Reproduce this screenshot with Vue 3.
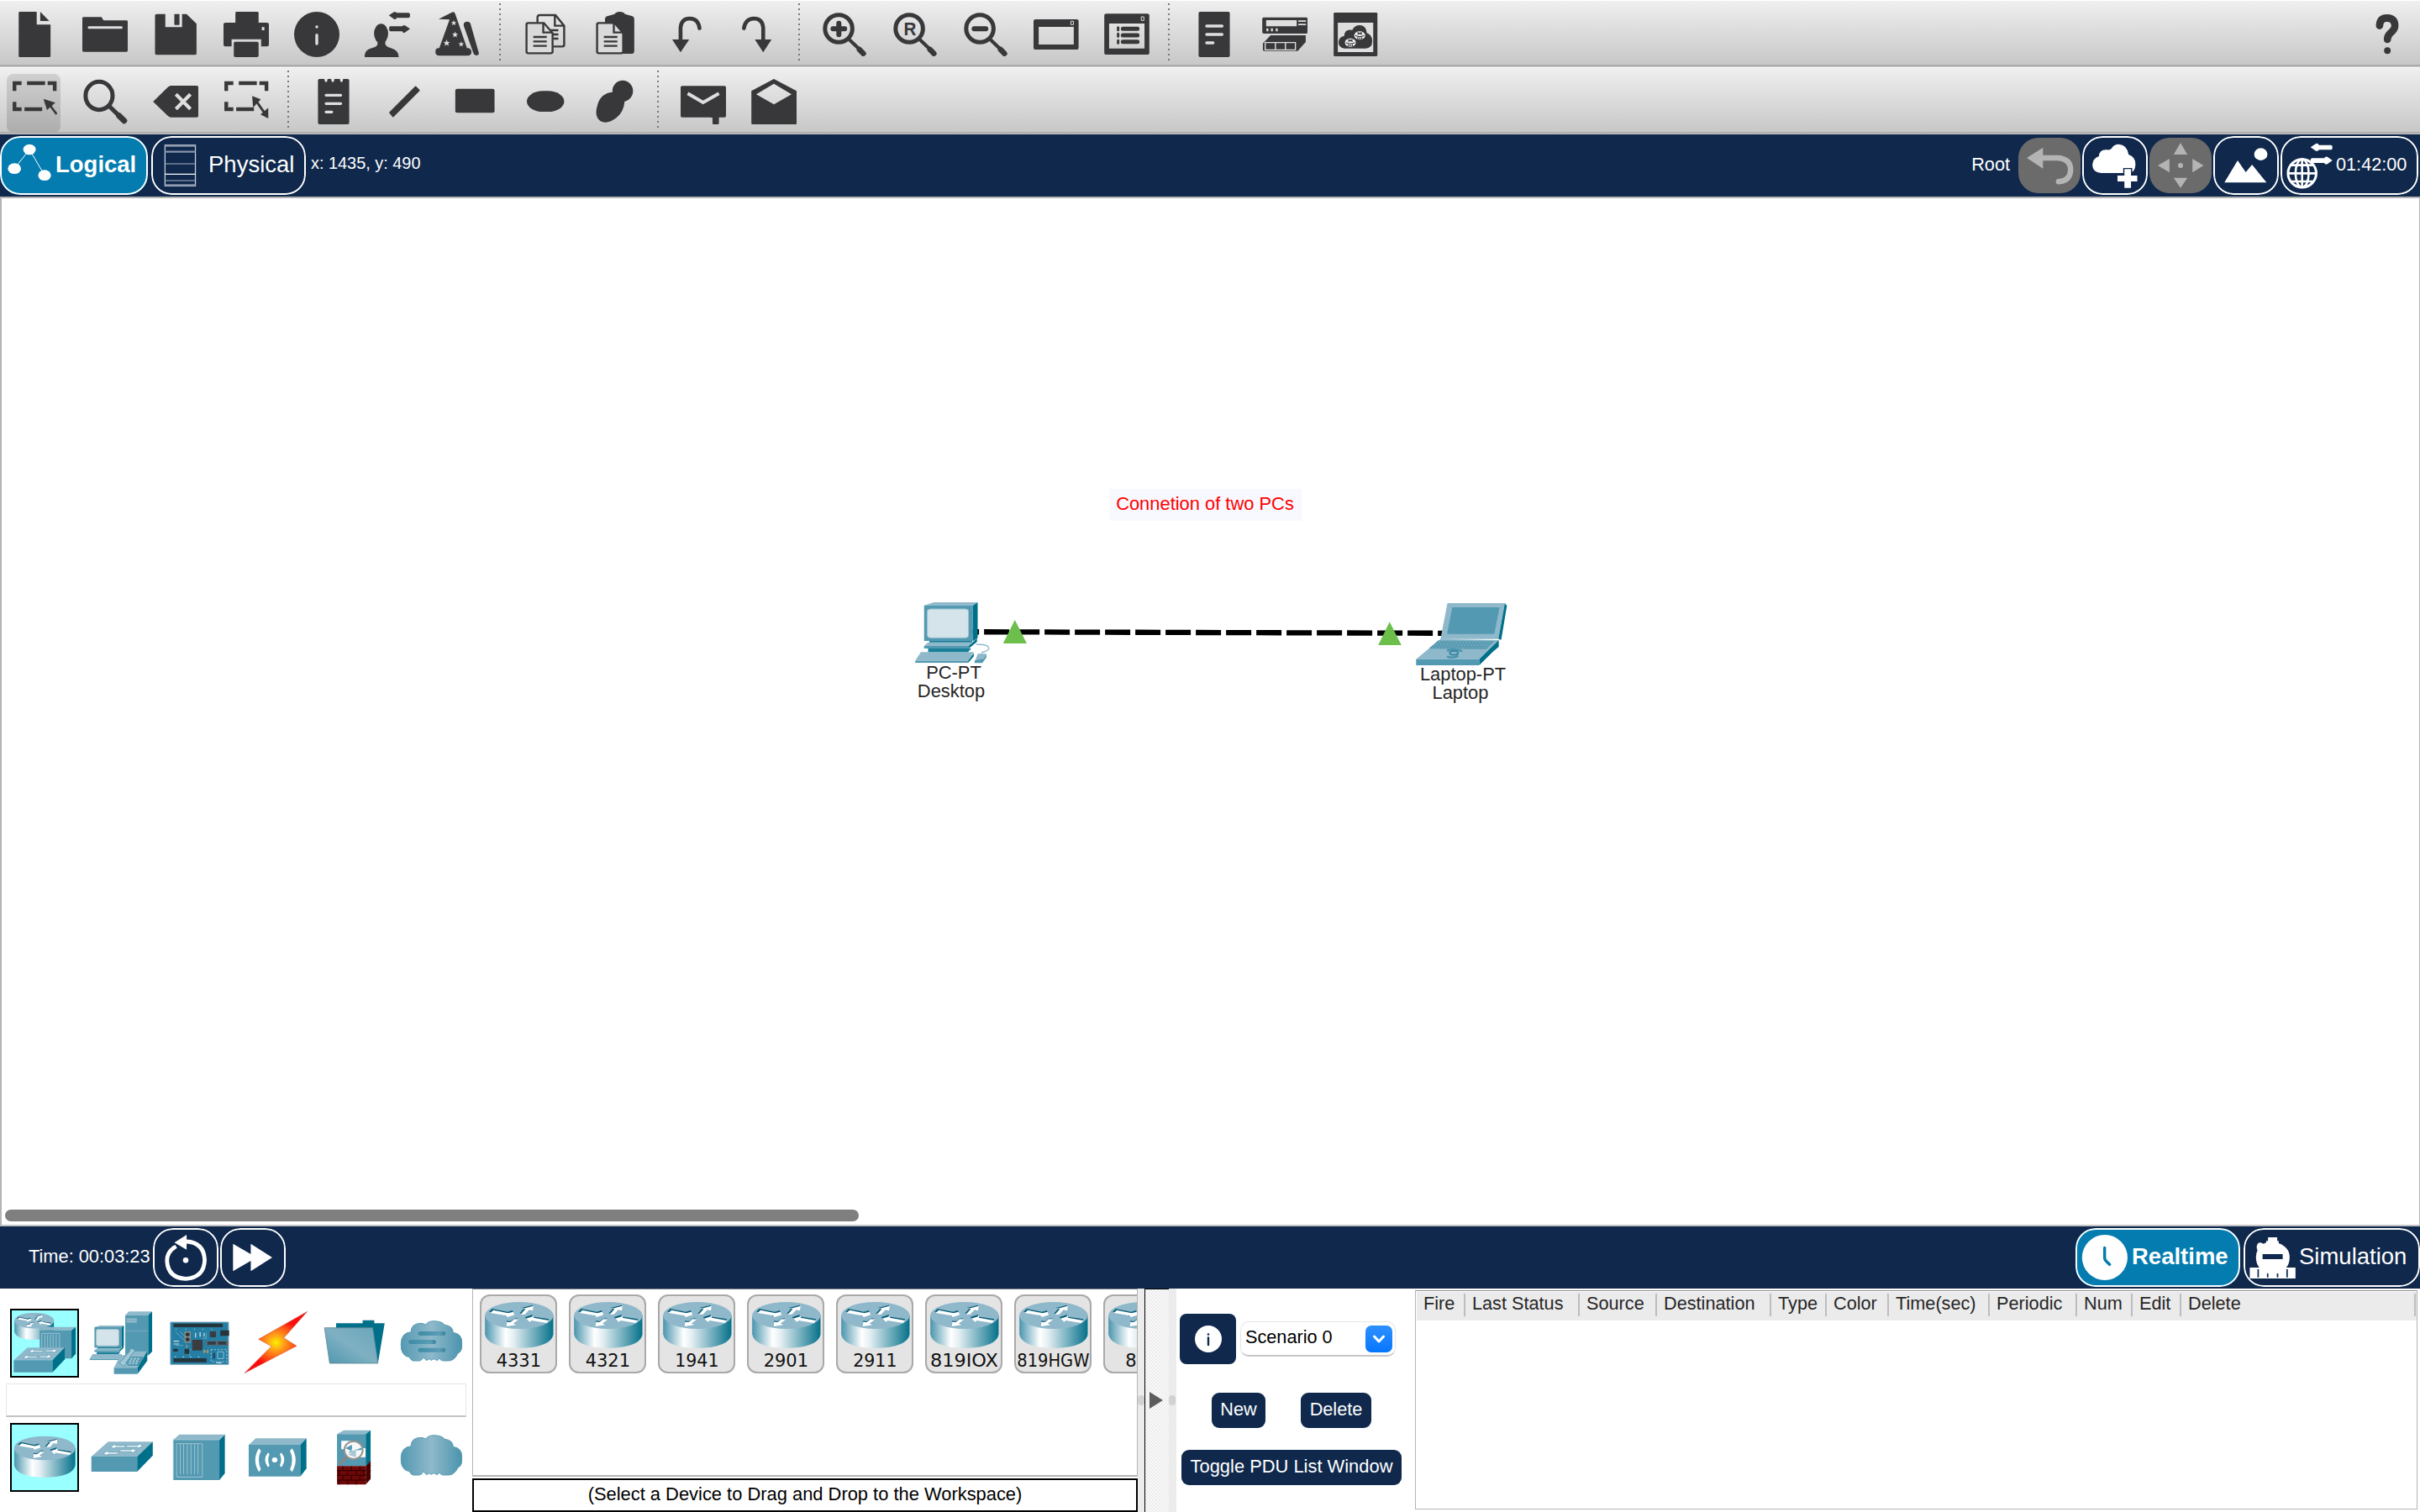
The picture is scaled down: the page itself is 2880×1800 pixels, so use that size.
<script setup>
function star(cx, cy, r) {
  const pts = []
  for (let i = 0; i < 10; i++) {
    const a = (-90 + i * 36) * Math.PI / 180
    const k = i % 2 ? 0.42 : 1
    pts.push((cx + Math.cos(a) * r * k).toFixed(1) + ',' + (cy + Math.sin(a) * r * k * 1.15).toFixed(1))
  }
  return `<polygon class="c" points="${pts.join(' ')}"/>`
}

const page = (dx, bg) => `<path class="s ${bg}" stroke-width="2.4" d="M${125 + dx} 82H${176 + dx}L${203 + dx} 118V184q0 6-6 6H${127 + dx}q-5 0-5-6V87q0-5 5-5z"/><path class="s" stroke-width="2.4" d="M${174 + dx} 82V116H${202 + dx}M${143 + dx} 132h42M${143 + dx} 148h42M${143 + dx} 164h42"/>`
const lens = (dx) => `<ellipse class="s" stroke-width="5" cx="${1092.5 + dx}" cy="102" rx="42.5" ry="49"/><path class="s" stroke-width="4.2" d="M${1125 + dx} 141L${1168 + dx} 188"/><path class="s r" stroke-width="6.5" d="M${1157 + dx} 177L${1169 + dx} 191"/>`
const marquee = (dx) => `<path class="s" stroke-width="4.4" d="M${45 + dx} 325V297H${67 + dx}M${84 + dx} 297h56M${148 + dx} 297H${170 + dx}V325M${45 + dx} 364V390H${67 + dx}M${76 + dx} 390h55"/>`

const mainTools = [
  { x: 36.5, g: '<path d="M62 42H114V88H157V200q0 4-4 4H62q-4 0-4-4V46q0-4 4-4zM125 42L153 75H125z"/>' },
  { x: 256, g: '<path d="M260 61H316q4 12 8 12H393q4 0 4 4V181q0 4-4 4H260q-4 0-4-4V65q0-4 4-4z"/><rect class="c" x="273" y="94" width="108" height="9" rx="4"/>' },
  { x: 475.5, g: '<path d="M487 50H514V97H566V50H580L611 85V191q0 5-5 5H487q-5 0-5-5V55q0-5 5-5z"/><rect x="542" y="50" width="16" height="39" rx="2"/>' },
  { x: 695, g: '<path fill-rule="evenodd" d="M732 46q0-4 4-4H800q4 0 4 4V81H830q6 0 6 6V160q0 6-6 6H812V140H720V166H700q-5 0-5-6V87q0-6 6-6H732zM814 97h8v11h-8z"/><rect x="727" y="149" width="77" height="55" rx="5"/>' },
  { x: 914.5, g: '<ellipse cx="985" cy="123" rx="70.5" ry="81"/><ellipse class="c" cx="985" cy="96" rx="4.5" ry="5"/><path class="l r" stroke-width="3.4" d="M985 125V156"/>' },
  { x: 1134, g: '<ellipse cx="1185" cy="120" rx="22" ry="35"/><path d="M1134 204q-2-26 22-32q18-5 18-16V140h24V156q0 10 18 16q24 8 24 32zM1209 55L1225 43q8-2 8 3H1270q5 0 5 9q0 9-5 9H1233q0 7-8 4zM1275 103L1259 91q-8-2-8 3H1214q-4 0-4 9q0 9 4 9H1251q0 7 8 4z"/>' },
  { x: 1353.5, g: '<path d="M1364 68L1405 44q8-3 10 4L1452 172H1456q10 2 10 14q0 12-12 13H1366q-12-1-12-14q0-12 8-13H1366L1398 70zM1442 92q-2-13 9-15q10-1 12 8L1489 190q0 8-8 8q-7 0-9-8z"/>' + star(1411, 82, 9) + star(1415, 124, 10) + star(1389, 154, 11) + star(1434, 158, 9) },
  { sep: true },
  { x: 110, g: '<path class="s" stroke-width="2.4" d="M156 80V62q0-8 8-8H212L239 92V160q0 6-6 6H206M210 56V92H238M197 108h24M204 123h17M206 138h15"/>' + page(0, 'f') },
  { x: 329.5, g: '<path d="M366 78V68q0-10 12-12L396 50Q400 42 412 42Q424 42 428 50L446 56q11 2 11 12V182q0 10-10 10H366z"/>' + page(219.5, 'f') },
  { x: 549, g: '<path class="s r" stroke-width="4.6" d="M601 145V98Q604 66 630 66Q656 67 660 101"/><path d="M575 141H628L601 187z"/>' },
  { x: 768.5, g: '<path class="s r" stroke-width="4.6" d="M858 145V98Q855 66 829 66Q803 67 798 101"/><path d="M832 141H884L858 187z"/>' },
  { sep: true },
  { x: 1040, g: lens(0) + '<path class="s r" stroke-width="6" d="M1075 103H1111M1093 83V124"/>' },
  { x: 1259.5, g: lens(219.5) + '<text x="1295" y="126" font-size="66" font-weight="bold" textLength="39" lengthAdjust="spacingAndGlyphs">R</text>' },
  { x: 1479, g: lens(439) + '<path class="s r" stroke-width="6" d="M1514 103H1550"/>' },
  { x: 183, g: '<path fill-rule="evenodd" d="M190 69H316q7 0 7 7V170q0 7-7 7H190q-7 0-7-7V76q0-7 7-7zM199 96H308V159H199z"/><rect class="l" stroke-width="1" x="299" y="76" width="8" height="12"/>' },
  { x: 402.5, g: '<path fill-rule="evenodd" d="M410 49H536q7 0 7 7V188q0 7-7 7H410q-7 0-7-7V56q0-7 7-7zM418 84H528V173H418z"/><rect class="l" stroke-width="1" x="518" y="60" width="8" height="13"/><path class="s r" stroke-width="5" d="M461 103H506M461 126H506M461 149H506"/><path class="s r" stroke-width="3" d="M446 98v9M446 121v9M446 145v9"/>' },
  { sep: true },
  { x: 674, g: '<rect x="696" y="42" width="97" height="162" rx="5"/><path class="l r" stroke-width="3.4" d="M721 93h48M721 123h48M721 153h20"/>' },
  { x: 893.5, g: '<rect x="894" y="62" width="141" height="58" rx="5"/><path class="c" d="M906 72h95v22h-95zM1006 73h24v5h-24zM1006 85h24v5h-24zM907 101h6v11h-6zM921 101h6v11h-6zM936 101h6v11h-6z"/><path d="M920 126H1029V150L1004 182H900q-4 0-4-5V155z"/><path class="l" stroke-width="1.4" d="M903 152H997V178H903zM935 152V178M966 152V178"/>' },
  { x: 1113, g: '<rect x="1116" y="45" width="136" height="156" rx="4"/><rect class="c" x="1129" y="81" width="110" height="105"/><path d="M1150 173Q1131 171 1131 150Q1132 132 1149 128Q1150 102 1174 107Q1180 90 1198 90Q1218 92 1219 118Q1236 125 1236 148Q1236 173 1215 173z"/><g class="w"><ellipse cx="1197" cy="127" rx="17" ry="15"/><ellipse cx="1168" cy="152" rx="17" ry="15"/></g><path class="s" stroke-width="1.2" d="M1183 127q14 8 28 0M1190 116l14 7M1204 116l-14 7M1191 133v7M1197 134v7M1203 133v7M1154 152q14 8 28 0M1161 141l14 7M1175 141l-14 7M1162 158v7M1168 159v7M1174 158v7"/>' },
  { x: 1385, w: 151, last: true, g: '<path class="s r" stroke-width="8.6" d="M1435 92Q1436 64 1460 64Q1486 65 1486 92Q1486 104 1472 117Q1461 127 1461 141"/><ellipse cx="1461" cy="181" rx="11" ry="12"/>' }
]

const editTools = [
  { x: 36.5, on: true, g: marquee(0) + '<path d="M135 353L172 367L146 393z"/><path class="s" stroke-width="2.6" d="M155 376L176 408"/>' },
  { x: 256, g: '<ellipse class="s" stroke-width="5" cx="308" cy="342" rx="42" ry="50"/><path class="s" stroke-width="5" d="M340 380L380 424"/><path class="s r" stroke-width="7" d="M370 413L386 431"/>' },
  { x: 475.5, g: '<path d="M476 363L522 311q5-5 10-5H610q7 0 7 6V412q0 7-7 7H532q-5 0-10-5z"/><path class="l" stroke-width="4.2" d="M547 337L592 389M592 337L547 389"/>' },
  { x: 695, g: marquee(658.5) + '<path d="M784 343L811 355L787 384zM834 423L810 409L834 385z"/><path class="s" stroke-width="2.8" d="M795 358L824 406"/>' },
  { sep: true },
  { x: 967, g: '<path d="M994 282H1009q1 11 5 11q4 0 5-11H1030q1 11 5 11q4 0 5-11H1057q1 11 5 11q4 0 5-11H1081q5 0 5 5V439q0 5-5 5H994q-5 0-5-5V287q0-5 5-5z"/><path class="l r" stroke-width="3.2" d="M1014 340h46M1014 370h46M1014 400h18"/>' },
  { x: 1186, g: '<path class="s d" stroke-linejoin="round" stroke-width="1.6" d="M1212 402L1292 310L1303 323L1222 416z"/>' },
  { x: 1406, g: '<rect x="1416" y="317" width="122" height="86" rx="6"/>' },
  { x: 110, g: '<rect x="123" y="325" width="116" height="74" rx="50" ry="37"/>' },
  { x: 329.5, g: '<ellipse cx="421" cy="325" rx="32" ry="38"/><path d="M388 329Q352 334 343 374Q331 415 352 433Q375 445 402 420Q424 400 427 362L428 340z"/>' },
  { sep: true },
  { x: 601, g: '<rect x="601" y="307" width="141" height="112" rx="5"/><path class="l" stroke-width="4" d="M623 334L671 366L720 334"/><path d="M683 415H720V440q0 4-4 4H703q-3 0-3-4V421z"/>' },
  { x: 820.5, g: '<path fill-rule="evenodd" d="M821 325L891 282L962 325V440q0 4-4 4H825q-4 0-4-4zM836 337L891 373L946 337L891 299z"/>' }
]

const routers = [
  { t: '4331', w: 149 }, { t: '4321', w: 149 }, { t: '1941', w: 146 }, { t: '2901', w: 149 },
  { t: '2911', w: 146 }, { t: '819IOX', w: 226 }, { t: '819HGW', w: 241 }, { t: '829', w: 112 }
]

const columns = [
  { t: 'Fire', w: 58 }, { t: 'Last Status', w: 136 }, { t: 'Source', w: 92 }, { t: 'Destination', w: 136 },
  { t: 'Type', w: 66 }, { t: 'Color', w: 74 }, { t: 'Time(sec)', w: 120 }, { t: 'Periodic', w: 104 },
  { t: 'Num', w: 66 }, { t: 'Edit', w: 58 }, { t: 'Delete', w: 279 }
]
</script>

<template>
  <div class="app">
    <svg class="defs" width="0" height="0">
      <defs>
        <linearGradient id="gBody"><stop offset="0" stop-color="#4a94ad" /><stop offset=".3" stop-color="#fff" /><stop offset=".42" stop-color="#e3eef2" /><stop offset="1" stop-color="#04708a" /></linearGradient>
        <linearGradient id="gCloud"><stop offset="0" stop-color="#5399b1" /><stop offset=".5" stop-color="#8fb9cb" /><stop offset="1" stop-color="#4a94ad" /></linearGradient>
        <linearGradient id="gFolder" x1="0" y1="1" x2="1" y2="0"><stop offset="0" stop-color="#4f96af" /><stop offset=".5" stop-color="#7fb0c2" /><stop offset="1" stop-color="#6aa5ba" /></linearGradient>
        <linearGradient id="gSlot"><stop offset="0" stop-color="#3f8ba5" /><stop offset=".8" stop-color="#5a9db4" /><stop offset="1" stop-color="#357f99" /></linearGradient>
        <radialGradient id="gBolt" gradientUnits="userSpaceOnUse" cx="903" cy="535" r="85"><stop offset="0" stop-color="#ffee00" /><stop offset=".35" stop-color="#ff9a1a" /><stop offset=".75" stop-color="#ff4a12" /><stop offset="1" stop-color="#fb0d0d" /></radialGradient>
        <symbol id="router" viewBox="105 389 228 166" preserveAspectRatio="none">
          <path fill="url(#gBody)" d="M105 437H333V505Q325 553 219 555Q113 553 105 505z" />
          <ellipse cx="219" cy="438" rx="114" ry="48" fill="#8fb8ca" />
          <g>
            <path fill="#0b5f7a" d="M119 425L129 414L180 425L197 420L200 431L175 441L170 435zM238 444L264 435L262 442L318 451L312 461L256 452L250 457zM220 431L236 412L226 411L264 401L262 418L250 415L234 432zM216 448L198 462L206 468L178 472L178 457L190 459L203 449z" />
            <path fill="#fff" d="M123 429L133 419L182 430L199 425L203 436L180 444L174 438zM242 449L268 440L266 446L317 456L311 465L260 456L254 461zM224 434L240 415L231 414L266 404L264 421L252 418L238 434zM217 452L201 466L208 472L177 477L178 461L190 462L203 451z" />
          </g>
        </symbol>
        <symbol id="pc" viewBox="60 471 154 217" preserveAspectRatio="none">
          <path fill="#8fb9cb" d="M82 482L106 471H214L202 482zM92 614H200L192 626H82zM74 649H204L190 680H60z" />
          <path fill="#00708a" d="M202 482L214 471V598L202 610zM192 626L212 600V612L192 636zM190 680L204 652V664L190 688z" />
          <path fill="#1a8099" d="M95 606H200V614H95zM92 636H198L190 649H92z" />
          <path fill="#5399b1" d="M82 482H202V609H82zM82 626H192V636H82zM60 680H190V688H60z" />
          <rect x="90" y="495" width="101" height="103" rx="9" fill="#d5e4ea" stroke="#9cc3d2" stroke-width="1" />
        </symbol>
        <symbol id="cloud" viewBox="1310 456 204 147" preserveAspectRatio="none">
          <path fill="url(#gCloud)" stroke="#5b9cb3" stroke-width="1" d="M1352 600Q1343 597 1340 587Q1311 582 1312 540Q1313 500 1345 497Q1345 468 1376 466Q1386 466 1393 471Q1402 458 1420 458Q1448 459 1455 472Q1483 475 1483 499Q1512 503 1512 535Q1514 567 1499 573Q1487 600 1468 600H1452Q1442 600 1438 591L1431 599L1420 593L1411 598L1405 593L1396 599L1385 587Q1381 600 1371 600z" />
        </symbol>
      </defs>
    </svg>

    <div v-for="(tools, n) in [mainTools, editTools]" :key="n" class="toolbar">
      <template v-for="(t, i) in tools" :key="i">
        <i v-if="t.sep" class="sep"></i>
        <span v-else class="tool" :class="{ on: t.on, last: t.last }">
          <svg :viewBox="`${t.x} ${n ? 282 : 42} ${t.w || 141} 162`" preserveAspectRatio="none" v-html="t.g"></svg>
        </span>
      </template>
    </div>

    <nav class="bar">
      <div class="pill on logical">
        <svg viewBox="0 486 173 210" preserveAspectRatio="none" width="66">
          <path d="M45 602L92 534L139 626" fill="none" stroke="#fff" stroke-width="1" />
          <g fill="#fff"><ellipse cx="92" cy="534" rx="19.500" ry="19" /><ellipse cx="45" cy="602" rx="20.500" ry="19" /><ellipse cx="139" cy="626" rx="20" ry="19" /></g>
        </svg><b>Logical</b>
      </div>
      <div class="pill physical">
        <svg viewBox="470 486 176 210" preserveAspectRatio="none" width="67">
          <path d="M513 518H608V664H513z" fill="none" stroke="#c9d0da" stroke-width="1.300" />
          <path d="M513 521H608M513 542H608M513 661H608" fill="none" stroke="#8792a8" stroke-width="2.200" />
          <path d="M513 585H608M513 645H608" stroke="#a9b3c3" stroke-width="1.200" /><path d="M513 622H608" stroke="#fff" stroke-width="1.200" />
        </svg><span>Physical</span>
      </div>
      <span class="coords">x: 1435, y: 490</span>
      <span class="root">Root</span>
      <div class="pill gray">
        <svg viewBox="230 492 207 198" preserveAspectRatio="none" width="74">
          <path d="M258 564L312 527V602z" fill="#b4b4b4" /><path d="M305 564H362Q404 568 404 606Q403 646 364 649" fill="none" stroke="#b4b4b4" stroke-width="6.500" stroke-linecap="round" />
        </svg>
      </div>
      <div class="pill">
        <svg viewBox="442 486 219 210" preserveAspectRatio="none" width="78">
          <path fill="#fff" d="M505 618Q476 616 476 588Q478 565 498 558Q499 532 526 535Q535 537 540 530Q548 515 564 515Q592 517 597 552Q620 560 620 587Q619 612 602 618z" />
          <path d="M556 623H579V600H609V623H632V652H609V675H579V652H556z" fill="#0f284c" />
          <path d="M560 627H583V604H605V627H626V648H605V671H583V648H560z" fill="#fff" />
        </svg>
      </div>
      <div class="pill gray">
        <svg viewBox="666 492 208 198" preserveAspectRatio="none" width="74">
          <g fill="#b4b4b4"><path d="M770 510L793 552H747zM770 671L793 635H747zM694 591L733 567V616zM847 591L810 567V616z" /><ellipse cx="770" cy="591" rx="8.500" ry="9" /></g>
        </svg>
      </div>
      <div class="pill">
        <svg viewBox="880 486 218 210" preserveAspectRatio="none" width="78">
          <g fill="#fff"><path d="M917 652L961 573L988 615L1009 588L1057 652z" /><ellipse cx="1038" cy="551" rx="22" ry="22" /></g>
        </svg>
      </div>
      <div class="pill clock">
        <svg viewBox="1104 486 182 210" preserveAspectRatio="none" width="65">
          <g fill="none" stroke="#fff" stroke-width="2.600"><ellipse cx="1176" cy="619" rx="47" ry="50" stroke-width="3" /><ellipse cx="1176" cy="619" rx="22" ry="50" /><path d="M1176 569V669M1129 619H1223M1139 590H1213M1139 648H1213" /></g>
          <path fill="#fff" d="M1204 526L1222 513q8-2 10 5H1272q5 0 5 9q0 8-5 8H1232q-2 6-10 4zM1277 573L1260 560q-8-2-10 5H1210q-6 0-6 8q0 9 6 9H1250q2 8 10 4z" />
        </svg><span>01:42:00</span>
      </div>
    </nav>

    <main class="workspace">
      <svg class="topology" viewBox="0 0 1568 900" preserveAspectRatio="none">
        <path d="M155 576.500L1380 581.500" stroke="#000" stroke-width="6.300" stroke-dasharray="30 6" />
        <path fill="#6cbf4b" d="M305 534L334 618H276zM1225 541L1254 624H1197z" />
        <use href="#pc" x="60" y="471" width="154" height="217" />
        <path d="M210 622Q240 620 241 635Q240 645 228 648Q222 650 225 656" fill="none" stroke="#8fb9cb" stroke-width="1.300" />
        <path fill="#8fb9cb" d="M214 655H235L229 676L207 681z" /><path fill="#5399b1" d="M206 679L229 673L235 655V668L225 688H206z" />
        <path fill="#8fb9cb" d="M1367 474H1508L1492 602H1350zM1350 602L1493 606L1445 674H1290z" />
        <path fill="#00708a" d="M1508 474L1513 484L1499 605L1492 602zM1445 674L1493 606V630L1480 646L1445 696z" />
        <path fill="#5399b1" d="M1379 489H1495L1482 584H1366zM1290 674H1445V696H1290z" />
        <path fill="#6aa5ba" d="M1345 607L1484 609L1462 639L1321 637z" />
        <path d="M1341 613L1480 615M1336 620L1475 622M1330 627L1470 629M1325 633L1466 635" stroke="#3d8aa4" stroke-width="1" stroke-dasharray="2 2" />
        <path d="M1366 645Q1372 638 1390 641Q1402 642 1402 648M1366 665Q1380 673 1394 662" fill="none" stroke="#4b93ac" stroke-width="2.500" /><ellipse cx="1383" cy="652" rx="10" ry="7" fill="none" stroke="#3a88a2" stroke-width="2" />
      </svg>
      <div class="note">Connetion of two PCs</div>
      <div class="name pc-name">PC-PT<br><span>Desktop</span></div>
      <div class="name lt-name">Laptop-PT<br><span>Laptop</span></div>
      <div class="scroll"></div>
    </main>

    <div class="bar sim">
      <span class="time">Time: 00:03:23</span>
      <div class="pill">
        <svg viewBox="501 126 214 210" preserveAspectRatio="none" width="78">
          <path d="M570 196Q547 213 547 243Q550 304 608 307Q668 303 670 240Q667 177 610 174" fill="none" stroke="#fff" stroke-width="4.800" />
          <path d="M571 178L611 150V203z" fill="#fff" /><path d="M564 191L574 186L580 197L570 204z" fill="#fff" /><ellipse cx="608" cy="241" rx="9" ry="10" fill="#fff" />
        </svg>
      </div>
      <div class="pill">
        <svg viewBox="721 126 214 210" preserveAspectRatio="none" width="78"><path fill="#fff" d="M763 182L821 219V182L891 231L821 280V243L763 280z" /></svg>
      </div>
      <div class="modes">
        <div class="pill on realtime">
          <svg viewBox="623 96 150 210" preserveAspectRatio="none" width="65">
            <ellipse cx="703.500" cy="201" rx="62.500" ry="81" fill="#fff" /><path d="M703 166V205Q705 214 717 226" fill="none" stroke="#047caf" stroke-width="3.400" stroke-linecap="round" />
          </svg><b>Realtime</b>
        </div>
        <div class="pill simulation">
          <svg viewBox="1085 96 147 210" preserveAspectRatio="none" width="64">
            <path fill="#fff" d="M1152 129H1177V142H1181V150Q1211 165 1211 200Q1211 222 1202 237H1227V276H1102V237H1128Q1119 222 1119 200Q1119 185 1123 176Q1118 160 1125 150Q1132 144 1139 152L1147 148V142H1152z" />
            <path fill="#0f284c" d="M1137 189H1192V207H1137zM1123 243h4v29h-4zM1149 258h4v14h-4zM1176 258h4v14h-4zM1202 243h4v29h-4z" />
          </svg><span>Simulation</span>
        </div>
      </div>
    </div>

    <footer class="dock">
      <section class="kinds">
        <div class="row">
          <div class="kind on">
            <svg viewBox="33 414 225.600 246" preserveAspectRatio="none">
              <use href="#router" x="47" y="428" width="130" height="97" />
              <path fill="#8fb9cb" d="M130 491L146 479H248L234 491z" />
              <path fill="#5399b1" d="M130 491H234V592H130z" /><path fill="#00708a" d="M234 491L248 479V575L234 592z" />
              <path d="M137 555V502H195V560M147 506V555M156 506V555M165 506V555M174 506V555M184 506V555" fill="none" stroke="#9cc3d2" stroke-width="1" />
              <path fill="#8fb9cb" d="M45 598L90 553H212L172 598z" /><path fill="#5399b1" d="M45 598H172V641H45z" /><path fill="#00708a" d="M172 598L212 553V595L172 641z" />
              <path fill="#fff" stroke="#3a88a2" stroke-width=".500" d="M95 566L110 558V563H142L139 568H107V572zM188 564L172 571V567H148L151 562H174V557zM76 587L92 579V584H124L121 589H88V594zM170 584L154 592V588H128L131 583H156V578z" />
            </svg>
          </div>
          <div class="kind">
            <svg viewBox="286 414 225.600 246" preserveAspectRatio="none">
              <path fill="#8fb9cb" d="M410 437L422 424H498L485 437z" /><path fill="#5399b1" d="M410 437H485V581H410z" /><path fill="#00708a" d="M485 437L498 424V567L485 581z" />
              <rect x="414" y="448" width="34" height="16" fill="#8fb9cb" /><path d="M410 493H485M414 456H448" stroke="#79abc0" stroke-width="1" />
              <use href="#pc" x="293" y="474" width="113" height="124" />
              <path fill="#8fb9cb" d="M373 625L392 584L440 566H482L450 625z" /><path fill="#5399b1" d="M373 625H450V647H373zM413 605L425 585H470L455 618H418z" /><path fill="#00708a" d="M450 625L482 566V600L450 647z" />
              <path d="M427 593h30M423 601h30M421 609h30" stroke="#b7d2dd" stroke-width="1.600" stroke-dasharray="2.500 1.500" />
              <path fill="#a4c7d5" stroke="#5399b1" stroke-width="1" d="M391 607Q394 600 400 598L424 566Q424 557 432 556L441 561Q443 568 434 574L412 608Q412 617 404 620z" />
            </svg>
          </div>
          <div class="kind">
            <svg viewBox="539 414 225.600 246" preserveAspectRatio="none">
              <rect x="558" y="462" width="190" height="151" fill="#257ea4" stroke="#7fa9b9" stroke-width="1" />
              <path d="M575 497L605 528M590 497L610 518M663 560L680 570M620 582V560H628M663 520H675V500M575 545H600M640 500V520M655 500V515" fill="none" stroke="#5fa6c2" stroke-width="1" />
              <path fill="#26343b" d="M568 467H729V480H568zM568 591H676V605H568zM721 491H750V511H721zM567 557H582V567H567zM604 558H620V575H604z" />
              <path fill="#3a3c3f" d="M629 525H663V563H629zM687 495H707V516H687z" /><path fill="#5c656a" d="M675 529H747V545H675z" /><path fill="#333c42" d="M680 531H706V542H680zM714 531H740V542H714z" />
              <rect x="604" y="495" width="20" height="40" fill="#8b8f8b" /><ellipse cx="614" cy="506" rx="7" ry="7" fill="#333" /><ellipse cx="614" cy="524" rx="7" ry="7" fill="#333" />
              <path d="M691 560H742V603H691z" fill="none" stroke="#a7cbd8" stroke-width="1" stroke-dasharray="2 2" /><path d="M712 568h20v24h-20z" fill="none" stroke="#8fbfd1" stroke-width="1" /><rect x="697" y="572" width="7" height="20" fill="#1c4c66" />
              <path d="M568 530H586M568 540H586M575 487h2M607 487h2M635 487h2M663 487h2M692 487h2M574 584v4M600 584v4M624 584v4M650 584v4M640 500v16M655 498v16M668 500v14M708 607H726" stroke="#c9dde4" stroke-width="1.200" />
              <path fill="#d79b4a" d="M678 560h4v12h-4zM609 545h5v6h-5zM667 562h4v10h-4z" />
            </svg>
          </div>
          <div class="kind">
            <svg viewBox="792 414 225.600 246" preserveAspectRatio="none"><path fill="url(#gBolt)" stroke="#c9574a" stroke-width=".500" d="M1006 424L929 518L971 547L800 644L888 548L846 523z" /></svg>
          </div>
          <div class="kind">
            <svg viewBox="1045 414 225.600 246" preserveAspectRatio="none"><path fill="#00708a" d="M1100 490V466H1187V455H1225V466H1259L1237 609L1215 490z" /><path fill="url(#gFolder)" stroke="#5b8594" stroke-width=".800" d="M1062 482H1220L1237 609H1079z" /></svg>
          </div>
          <div class="kind">
            <svg viewBox="1298 414 225.600 246" preserveAspectRatio="none"><use href="#cloud" x="1310" y="456" width="204" height="147" /><g fill="url(#gSlot)"><rect x="1368" y="495" width="90" height="15" rx="8" /><rect x="1337" y="525" width="90" height="15" rx="8" /><rect x="1368" y="554" width="90" height="15" rx="8" /></g></svg>
          </div>
        </div>
        <div class="search"></div>
        <div class="row">
          <div class="kind on">
            <svg viewBox="33 822 225.600 246" preserveAspectRatio="none"><use href="#router" x="46" y="868" width="201" height="149" /></svg>
          </div>
          <div class="kind">
            <svg viewBox="286 822 225.600 246" preserveAspectRatio="none">
              <path fill="#8fb9cb" d="M299 942L354 889H500L449 942z" /><path fill="#5399b1" d="M299 942H449V996H299z" /><path fill="#00708a" d="M449 942L500 889V938L449 996z" />
              <path fill="#fff" stroke="#3a88a2" stroke-width=".500" d="M361 907L379 898V903H412L408 909H376V914zM468 904L450 912V908H412L416 902H453V896zM337 931L355 922V927H388L384 933H352V938zM447 921L430 929V924H391L395 918H432V913z" />
            </svg>
          </div>
          <div class="kind">
            <svg viewBox="539 822 225.600 246" preserveAspectRatio="none">
              <path fill="#8fb9cb" d="M567 882L587 863H736L718 882z" /><path fill="#5399b1" d="M567 882H718V1026H567z" /><path fill="#00708a" d="M718 882L736 863V1002L718 1026z" />
              <path d="M578 896H662V1015H578zM590 896V1005M601 896V1005M613 896V1005M625 896V1005M637 896V1005M648 896V1005" fill="none" stroke="#9cc3d2" stroke-width="1" /><path d="M567 1026V882H718L736 863" fill="none" stroke="#a9cbd8" stroke-width=".800" />
            </svg>
          </div>
          <div class="kind">
            <svg viewBox="792 822 225.600 246" preserveAspectRatio="none">
              <path fill="#8fb9cb" d="M814 900L837 877H1003L983 900z" /><path fill="#5399b1" d="M814 900H983V1013H814z" /><path fill="#00708a" d="M983 900L1003 877V985L983 1013z" />
              <g fill="#fff"><ellipse cx="899" cy="954" rx="9" ry="9" /><path d="M877 928L882 934Q874 954 882 974L877 980Q858 954 877 928zM921 928L916 934Q924 954 916 974L921 980Q940 954 921 928zM847 913L854 921Q840 954 854 988L847 997Q824 954 847 913zM956 913L949 921Q963 954 949 988L956 997Q979 954 956 913z" /></g>
            </svg>
          </div>
          <div class="kind">
            <svg viewBox="1045 822 225.600 246" preserveAspectRatio="none">
              <path fill="#8fb9cb" d="M1103 862L1125 848H1213L1197 862z" /><path fill="#5399b1" d="M1103 862H1197V976H1103z" /><path fill="#00708a" d="M1197 862L1213 848V960L1197 976z" />
              <path fill="#700707" d="M1103 976H1197V1042H1103z" /><path fill="#4d0303" d="M1197 976L1213 958V1022L1197 1042z" />
              <path d="M1103 992H1197L1213 974M1103 1009H1197L1213 991M1103 1026H1197L1213 1008M1122 976V992M1150 976V992M1178 976V992M1110 992V1009M1138 992V1009M1166 992V1009M1190 992V1009M1122 1009V1026M1150 1009V1026M1178 1009V1026M1110 1026V1042M1138 1026V1042M1166 1026V1042" fill="none" stroke="#2a0000" stroke-width="1" />
              <path fill="#fff" d="M1117 886H1156V916H1117zM1165 912H1196V944H1165z" /><path d="M1136 941L1110 970" stroke="#8a8583" stroke-width="3.200" />
              <ellipse cx="1157" cy="919" rx="30" ry="32" fill="#f7fafb" stroke="#97918f" stroke-width="2" /><path fill="#5399b1" d="M1130 912L1152 900V916L1140 930L1184 910L1184 918L1150 922z" /><path fill="#a9c8d4" d="M1140 936L1165 915V944z" />
            </svg>
          </div>
          <div class="kind">
            <svg viewBox="1298 822 225.600 246" preserveAspectRatio="none"><use href="#cloud" x="1310" y="864" width="204" height="147" /></svg>
          </div>
        </div>
      </section>

      <section class="models">
        <div class="shelf">
          <div v-for="r in routers" :key="r.t" class="card">
            <svg viewBox="88 363 257 282" preserveAspectRatio="none">
              <use href="#router" x="105" y="389" width="228" height="166" />
              <text :x="217.500 - r.w / 2" y="622" font-size="64" :textLength="r.w" lengthAdjust="spacingAndGlyphs">{{ r.t }}</text>
            </svg>
          </div>
        </div>
        <div class="hint">(Select a Device to Drag and Drop to the Workspace)</div>
      </section>

      <div class="split"><i></i></div>
      <div class="grip"><svg width="16" height="20" viewBox="0 0 16 20"><path fill="#5c5c5c" d="M0 0L16 10L0 20z" /></svg></div>
      <div class="split wide"><i></i></div>

      <section class="scenario">
        <div class="line pick">
          <div class="info"><svg width="32" height="32" viewBox="0 0 32 32"><circle cx="16" cy="16" r="16" fill="#fff" /><path d="M16 14.500V23" stroke="#0f284c" stroke-width="2.400" stroke-linecap="round" /><circle cx="16" cy="10.500" r="1.300" fill="#0f284c" /></svg></div>
          <div class="combo"><span>Scenario 0</span><i><svg width="16" height="10" viewBox="0 0 16 10"><path d="M2.500 2L8 8L13.500 2" fill="none" stroke="#fff" stroke-width="3" stroke-linecap="round" stroke-linejoin="round" /></svg></i></div>
        </div>
        <div class="line pair"><div class="btn new">New</div><div class="btn del">Delete</div></div>
        <div class="btn toggle">Toggle PDU List Window</div>
      </section>

      <section class="pdu">
        <div class="head"><span v-for="c in columns" :key="c.t" :style="{ width: c.w + 'px' }">{{ c.t }}</span></div>
      </section>
    </footer>
  </div>
</template>

<style>
body { margin: 0; background: #fff; }
svg { display: block; flex: none; }
svg * { vector-effect: non-scaling-stroke; }
.toolbar svg { fill: #38383a; }
.toolbar .c { fill: #dedede; }
.toolbar .w { fill: #f2f2f2; }
.toolbar .s { fill: none; stroke: #38383a; }
.toolbar .s.f { fill: #dadada; }
.toolbar .s.d { fill: #38383a; }
.toolbar .l { fill: none; stroke: #dedede; }
.toolbar .r { stroke-linecap: round; }
</style>

<style scoped>
.app { width: 2880px; height: 1800px; overflow: hidden; display: flex; flex-direction: column; font-family: "Liberation Sans", Arial, sans-serif; font-size: 21.7px; color: #000; background: #fff; }
.app * { box-sizing: border-box; }
.defs { position: absolute; }
.toolbar { flex: none; height: 80px; padding: 7px 8px 0; display: flex; gap: 20px; align-items: flex-start; border-top: 1px solid #fff; background: linear-gradient(#adadad, #adadad) 0 76px / 100% 2px no-repeat, linear-gradient(#efefef, #c6c6c6); }
.tool { width: 64px; height: 70px; padding: 6px 4px 0 6px; border-radius: 8px; }
.tool svg { width: 54px; height: 54px; }
.tool.on { background: linear-gradient(#d0d0d0, #adadad); }
.tool.last { margin-left: auto; }
.sep { width: 2px; height: 68px; margin: -4px 0 0 -2px; background: repeating-linear-gradient(#777 0 2px, transparent 2px 6px); }
.bar { flex: none; height: 74px; background: #0f284c; color: #fff; display: flex; align-items: center; }
.pill { flex: none; height: 70px; min-width: 78px; border-radius: 24px; position: relative; display: flex; align-items: center; overflow: hidden; font-size: 27.5px; white-space: nowrap; }
.pill::after { content: ""; position: absolute; inset: 0; border: 2px solid #fff; border-radius: 24px; }
.pill svg { height: 70px; }
.pill b, .pill span { padding-bottom: 2px; }
.pill.on { background: #047caf; }
.pill.gray { height: 66px; min-width: 74px; margin: 0 2px; background: #6b6b6b; }
.pill.gray svg { height: 66px; }
.pill.gray::after { display: none; }
.pill + .pill:not(.gray) { margin-left: 2px; }
.gray + .pill:not(.gray) { margin-left: 0; }
.logical { width: 176px; }
.pill.pill.physical { width: 184px; margin-left: 4px; }
.physical span { padding-left: 1px; }
.coords { font-size: 19.9px; margin-left: 6px; padding-bottom: 5px; }
.root { margin-left: auto; padding: 0 8px 3px 0; }
.clock { width: 164px; margin-right: 2px; font-size: 21.7px; }
.clock span { padding-left: 1px; }
.workspace { flex: none; height: 1226px; position: relative; background: #fff; border: 2px solid #b4b4b4; border-width: 2px 1px 2px 2px; border-bottom-color: #c2c2c6; }
.topology { position: absolute; left: 1058px; top: 324px; width: 760px; height: 300px; }
.note { position: absolute; left: 1318px; top: 346px; width: 229px; height: 38px; line-height: 35px; padding-right: 1px; text-align: center; color: #f00; background: #f8f8ff; font-size: 21.9px; white-space: nowrap; }
.name { position: absolute; width: 140px; text-align: center; line-height: 22px; color: #262626; font-size: 21.9px; }
.name span { margin-left: -6px; }
.pc-name { left: 1063px; top: 554px; }
.lt-name { left: 1669px; top: 556px; }
.scroll { position: absolute; left: 4px; top: 1204px; width: 1016px; height: 14px; border-radius: 7px; background: #7f7f7f; }
.time { margin: 0 3px 0 34px; padding-bottom: 3px; width: 145px; white-space: nowrap; font-size: 21.8px; }
.modes { margin-left: auto; display: flex; }
.realtime { width: 196px; }
.realtime b { padding-left: 2px; }
.pill.pill.simulation { width: 210px; margin-left: 4px; }
.simulation span { padding-left: 2px; }
.dock { flex: none; height: 266px; display: flex; align-items: stretch; }
.kinds { width: 562px; padding-top: 24px; }
.row { display: flex; gap: 10px; padding-left: 12px; }
.kind { width: 82px; height: 82px; position: relative; }
.kind svg { width: 82px; height: 82px; }
.kind.on { background: #99ffff; outline: 2px solid #000; outline-offset: -2px; }
.search { width: 548px; height: 40px; margin: 7px 0 7px 7px; border: 1px solid #e6e6e6; border-bottom: 2px solid #c4c4c4; }
.models { width: 792px; display: flex; flex-direction: column; gap: 2px; }
.shelf { height: 224px; border: 1px solid #b4b4b4; border-top-color: #7d8085; border-bottom: 2px solid #b4b4b4; padding: 6px 0 0 8px; display: flex; gap: 14px; overflow: hidden; }
.card { flex: none; width: 92px; height: 94px; border-radius: 12px; background: #e4e4e4; box-shadow: inset 0 0 0 2px #a9a9a9; }
.card svg { width: 92px; height: 94px; overflow: visible; }
.card text { font-family: "DejaVu Sans", Verdana, sans-serif; fill: #111; }
.hint { height: 40px; border: 2px solid #000; display: flex; align-items: center; justify-content: center; padding: 0 0 3px; font-size: 21.9px; white-space: nowrap; }
.split { width: 8px; background: #ececec; display: flex; align-items: center; }
.split.wide { width: 9px; }
.split i { width: 8px; height: 12px; margin-top: -1px; border-radius: 4px; background: #d2d2d2; }
.grip { width: 29px; border: 1px solid #000; border-width: 1px 0 0 1px; padding: 0 0 2px 5px; display: flex; align-items: center; background: repeating-conic-gradient(#ececec 0 25%, #f9f9f9 0 50%) 0 0 / 4px 4px; }
.scenario { width: 284px; padding: 30px 0 0 4px; display: flex; flex-direction: column; }
.line { display: flex; }
.pick { gap: 5px; align-items: center; }
.info { width: 67px; height: 60px; border-radius: 8px; background: #0f284c; display: flex; align-items: center; justify-content: center; }
.combo { width: 185px; height: 42px; border-radius: 10px; border: 1px solid #e6e6e6; border-bottom: 2px solid #c6c6c6; padding: 0 3px 0 5px; display: flex; align-items: center; justify-content: space-between; }
.combo span { padding-bottom: 4px; }
.combo i { width: 32px; height: 32px; border-radius: 7px; background: linear-gradient(#2e90ff, #0676ff); display: flex; align-items: center; justify-content: center; }
.pair { margin: 34px 0 26px 38px; gap: 42px; }
.btn { height: 42px; border-radius: 9px; background: #0f284c; color: #fff; display: flex; align-items: center; justify-content: center; padding-bottom: 3px; white-space: nowrap; }
.new { width: 64px; }
.del { width: 84px; }
.toggle { width: 262px; margin-left: 2px; font-size: 21.9px; }
.pdu { width: 1193px; height: 261px; margin-top: 2px; border: 1px solid #b4b4b4; border-top-color: #8e9196; padding: 1px 0 0 1px; }
.head { height: 34px; background: #ebebeb; display: flex; align-items: center; color: #262626; }
.head span { flex: none; height: 27px; line-height: 24px; padding-left: 8px; border-right: 2px solid #bdbdbd; white-space: nowrap; margin-bottom: 3px; }
</style>
